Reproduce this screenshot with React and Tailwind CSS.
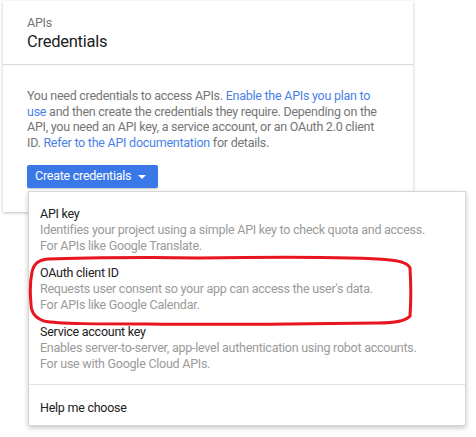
import React from 'react';

const items = [
  {
    title: 'API key',
    desc: ['Identifies your project using a simple API key to check quota and access.', 'For APIs like Google Translate.'],
  },
  {
    title: 'OAuth client ID',
    desc: ["Requests user consent so your app can access the user's data.", 'For APIs like Google Calendar.'],
  },
  {
    title: 'Service account key',
    desc: ['Enables server-to-server, app-level authentication using robot accounts.', 'For use with Google Cloud APIs.'],
  },
];

function App() {
  return (
    <div className="relative w-[476px] h-[437px] bg-white overflow-hidden font-['Roboto',sans-serif] text-[12.5px] tracking-[-0.25px]">
      {/* Credentials card */}
      <div className="ml-[3px] mt-[1px] w-[410px] bg-white shadow-[0_1px_3px_rgba(0,0,0,0.25)]">
        <div className="h-[64px] pl-[24px] pt-[14px] border-b border-[#dadada]">
          <div className="leading-[16px] text-[#757575]">APIs</div>
          <div className="text-[16.5px] leading-[22px] text-[#212121]">Credentials</div>
        </div>
        <div className="pl-[24px] pr-[18px] pt-[23px] pb-[24px]">
          <p className="leading-[15.5px] text-[#757575] whitespace-nowrap">
            You need credentials to access APIs. <a className="text-[#4a7fe8]">Enable the APIs you plan to</a>
            <br />
            <a className="text-[#4a7fe8]">use</a> and then create the credentials they require. Depending on the
            <br />
            API, you need an API key, a service account, or an OAuth 2.0 client
            <br />
            ID. <a className="text-[#4a7fe8]">Refer to the API documentation</a> for details.
          </p>
          <button className="mt-[15px] h-[23px] w-[131px] flex items-center justify-between pl-[8px] pr-[12px] bg-[#3b78e7] rounded-[2px] text-white whitespace-nowrap shadow-[0_1px_1px_rgba(0,0,0,0.2)]">
            <span>Create credentials</span>
            <span className="w-0 h-0 border-l-[4px] border-r-[4px] border-t-[4px] border-l-transparent border-r-transparent border-t-white" />
          </button>
        </div>
      </div>

      {/* Dropdown menu */}
      <div className="absolute left-[28px] top-[191px] w-[438px] bg-white border border-[#d6d6d6] shadow-[0_2px_5px_rgba(0,0,0,0.22)] pt-[8px] pb-[9px]">
        {items.map((it) => (
          <div key={it.title} className="px-[11px] py-[5px]">
            <div className="leading-[17px] text-[#212121]">{it.title}</div>
            {it.desc.map((d) => (
              <div key={d} className="leading-[16px] text-[#9a9a9a] whitespace-nowrap">{d}</div>
            ))}
          </div>
        ))}
        <div className="mt-[7px] border-t border-[#e3e3e3]" />
        <div className="px-[11px] pt-[14px] leading-[17px] text-[#212121]">Help me choose</div>
      </div>

      {/* red annotation */}
      <svg className="absolute left-[28px] top-[254px]" width="388" height="74" viewBox="0 0 388 74" fill="none">
        <path
          d="M20 5 C60 4 120 3 170 4 C240 3 320 2 362 6 C372 7 380 9 382 14 C383 30 383 48 382 62 C378 67 366 69 350 69 C280 70 200 71 120 70 C70 70 30 70 16 67 C7 64 3 58 3 50 C2 40 2 28 4 18 C6 9 11 6 20 5 Z"
          stroke="#e8141e"
          strokeWidth="3"
        />
      </svg>
    </div>
  );
}

export default App;
